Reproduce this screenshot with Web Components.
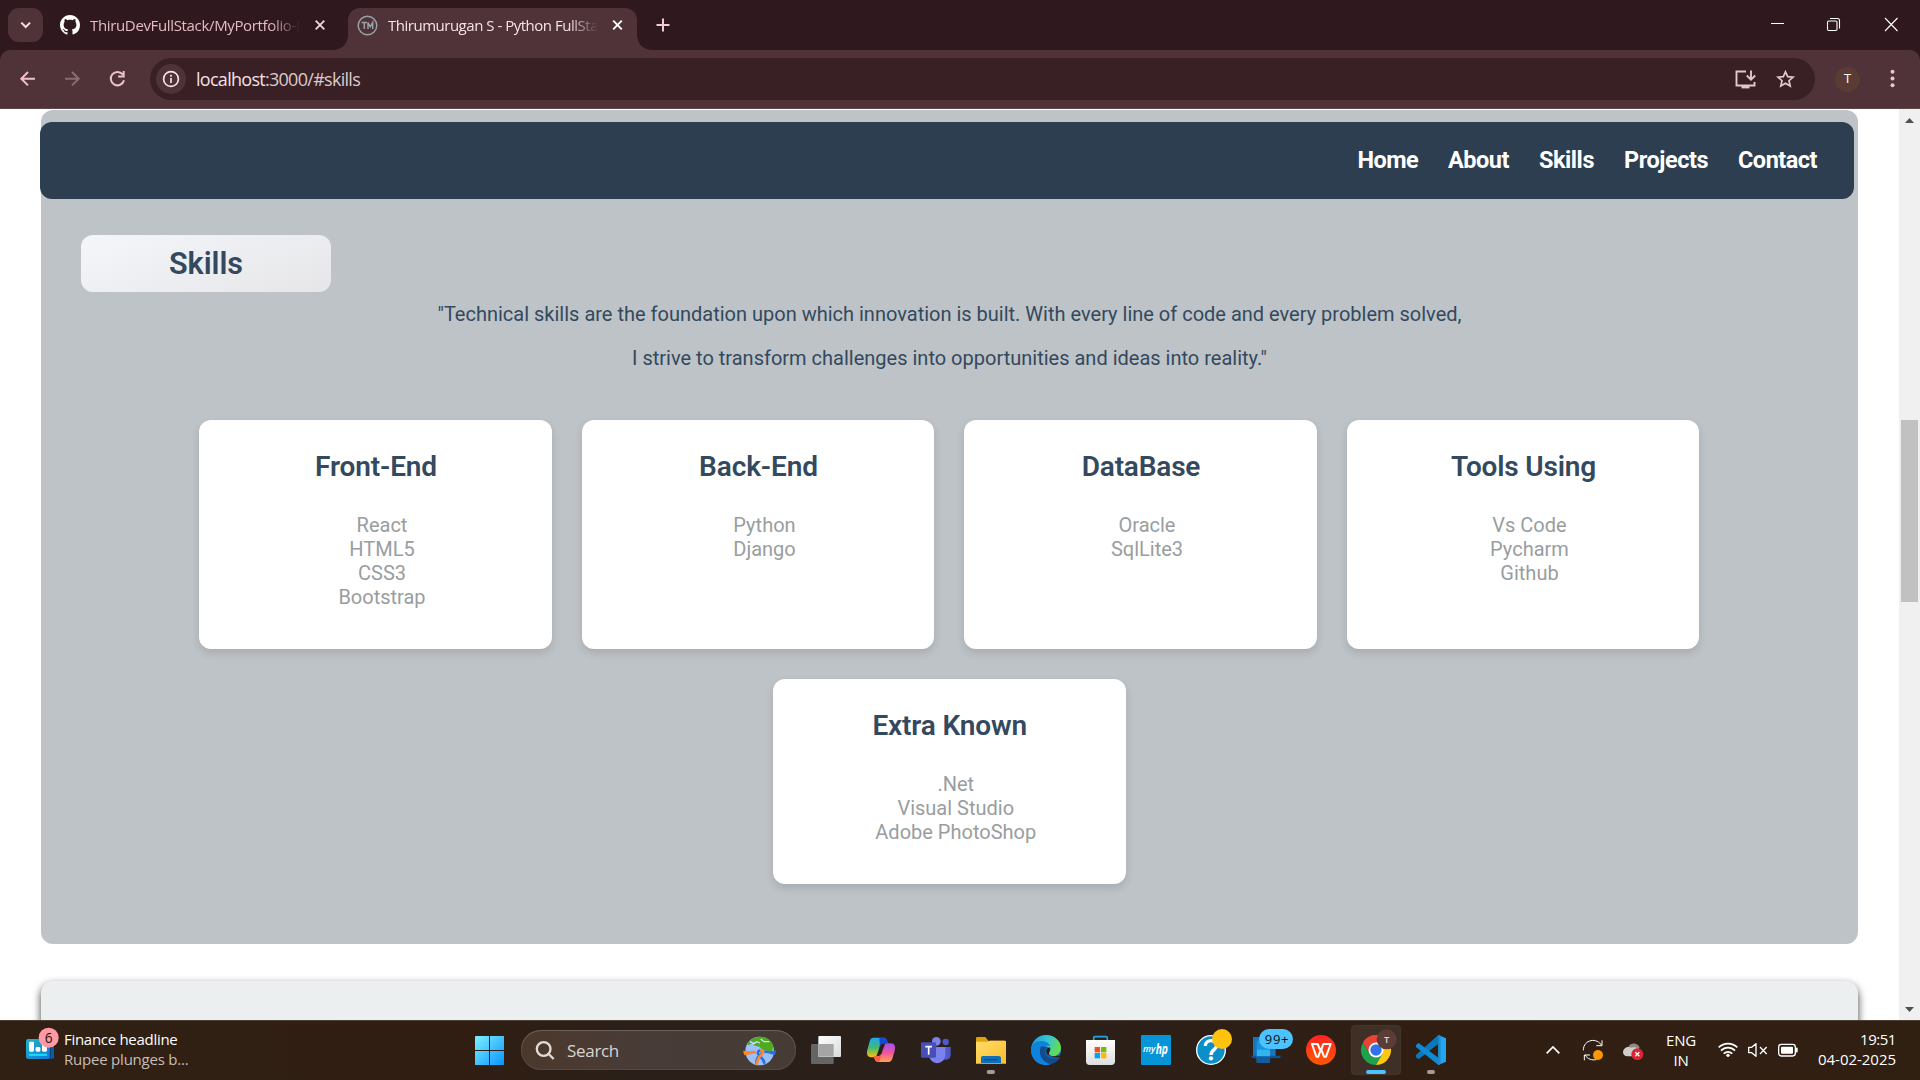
<!DOCTYPE html>
<html lang="en">
<head>
<meta charset="utf-8">
<title>Thirumurugan S - Python FullStack Developer</title>
<style>
html,body{margin:0;padding:0}
body{width:1920px;height:1080px;overflow:hidden;background:#fff;font-family:Roboto,sans-serif}
</style>
</head>
<body>
<desktop-screen>
  <browser-chrome></browser-chrome>
  <page-viewport>
    <skills-section>
      <skill-card label="Front-End" w="122"><li>React</li><li>HTML5</li><li>CSS3</li><li>Bootstrap</li></skill-card>
      <skill-card label="Back-End" w="119"><li>Python</li><li>Django</li></skill-card>
      <skill-card label="DataBase" w="118.5"><li>Oracle</li><li>SqlLite3</li></skill-card>
      <skill-card label="Tools Using" w="145"><li>Vs Code</li><li>Pycharm</li><li>Github</li></skill-card>
      <skill-card label="Extra Known" w="154.5"><li>.Net</li><li>Visual Studio</li><li>Adobe PhotoShop</li></skill-card>
    </skills-section>
    <next-section></next-section>
  </page-viewport>
  <task-bar></task-bar>
</desktop-screen>
<script>
const define = (name, html, cls) => {
  const t = document.createElement('template');
  t.innerHTML = html;
  customElements.define(name, cls ? cls(t) : class extends HTMLElement {
    constructor() {
      super();
      this.attachShadow({ mode: 'open' }).append(t.content.cloneNode(true));
    }
  });
};

define('desktop-screen', `<style>
:host{display:flex;flex-direction:column;width:1920px;height:1080px;overflow:hidden}
</style><slot></slot>`);

define('browser-chrome', `<style>
:host{display:block;height:109px;flex:none;background:#2f191e;font-family:"Open Sans",sans-serif}
.strip{display:flex;height:50px;align-items:flex-start}
.drop{width:35px;height:34px;margin:8px 0 0 8px;border-radius:11px;background:#4f3339;flex:none}
.tab{display:flex;align-items:center;height:42px;padding-bottom:8px;margin-top:8px;font-size:15px;line-height:20px;box-sizing:border-box}
.tab svg{flex:none}
.t1{width:297px;margin-left:8px;padding-left:9px;color:#e6bcc4}
.t2{width:289px;background:#4f3339;border-radius:12px 12px 0 0;position:relative;color:#f6e3e6;padding-left:9px}
.t2::before,.t2::after{content:"";position:absolute;bottom:0;width:14px;height:14px}
.t2::before{left:-14px;background:radial-gradient(circle at 0 0,transparent 13.5px,#4f3339 14px)}
.t2::after{right:-14px;background:radial-gradient(circle at 100% 0,transparent 13.5px,#4f3339 14px)}
.label{white-space:nowrap;width:210px;margin-left:10px;-webkit-mask-image:linear-gradient(90deg,#000 86%,transparent 100%);mask-image:linear-gradient(90deg,#000 86%,transparent 100%)}
.t1 .label{overflow:hidden}
.plus{margin:8px 0 0 12px}
.win{margin:8px 0 0 auto;display:flex}
.bar{height:59px;background:#4f3339;border-radius:10px 10px 0 0;border-bottom:1px solid #5c474b;box-sizing:border-box;display:flex;align-items:flex-start}
.nav{margin-left:0;flex:none}
.omni{margin:8px 0 0;width:1665px;height:42px;border-radius:21px;background:#382024;display:flex;align-items:center;font-size:18px;color:#f5e1e4}
.omni svg{flex:none}
.omni .u{margin-left:9px;white-space:nowrap;line-height:24px}
.omni .r{margin-left:auto;margin-right:0}
.rest{display:flex;align-items:center;height:42px;margin-top:8px}
.ava{width:25px;height:25px;border-radius:50%;background:#5b3b33;margin-left:20px;display:grid;place-items:center;font:13px/25px "Open Sans",sans-serif;color:#fff}
.ava span{margin-top:-2px}
.dots{margin-left:20px}
</style>
<div class="strip">
  <div class="drop"><svg width="35" height="34" viewBox="8 8 35 34" fill="none" stroke="#f1dfe2" stroke-width="2"><path d="M21.3 22.6l4.4 4.4 4.4-4.4"/></svg></div>
  <div class="tab t1">
    <svg width="20" height="20" viewBox="0 0 16 16" fill="#fff"><path d="M8 0C3.58 0 0 3.58 0 8c0 3.54 2.29 6.53 5.47 7.59.4.07.55-.17.55-.38 0-.19-.01-.82-.01-1.49-2.01.37-2.53-.49-2.69-.94-.09-.23-.48-.94-.82-1.13-.28-.15-.68-.52-.01-.53.63-.01 1.08.58 1.23.82.72 1.21 1.87.87 2.33.66.07-.52.28-.87.51-1.07-1.78-.2-3.64-.89-3.64-3.95 0-.87.31-1.59.82-2.15-.08-.2-.36-1.02.08-2.12 0 0 .67-.21 2.2.82.64-.18 1.32-.27 2-.27s1.36.09 2 .27c1.53-1.04 2.2-.82 2.2-.82.44 1.1.16 1.92.08 2.12.51.56.82 1.27.82 2.15 0 3.07-1.87 3.75-3.65 3.95.29.25.54.73.54 1.48 0 1.07-.01 1.93-.01 2.2 0 .21.15.46.55.38A8.01 8.01 0 0016 8c0-4.42-3.58-8-8-8z"/></svg>
    <div class="label"><fit-text w="206">ThiruDevFullStack/MyPortfolio-</fit-text>M</div>
    <svg width="40" height="34" viewBox="300 8 40 34" stroke="#f0d9dd" stroke-width="1.8"><path d="M315.700 20.700l8.600 8.600M324.300 20.700l-8.600 8.600"/></svg>
  </div>
  <div class="tab t2">
    <svg width="21" height="21" viewBox="0 0 21 21" fill="none" stroke="#9b9fa6" stroke-width="1.5"><circle cx="10.500" cy="10.500" r="9.300"/><path d="M4.500 7.500h5.500M7.300 7.500v6.500M11 14V7.500l2.300 4.300 2.400-4.300V14"/></svg>
    <div class="label"><fit-text w="210">Thirumurugan S - Python FullSta</fit-text></div>
    <svg width="38" height="34" viewBox="598 8 38 34" stroke="#fff" stroke-width="1.9"><path d="M613.200 20.700l8.600 8.600M621.800 20.700l-8.600 8.600"/></svg>
  </div>
  <svg class="plus" width="28" height="34" viewBox="649 8 28 34" stroke="#f0cdd3" stroke-width="2"><path d="M656.500 25h13M663 18.500v13"/></svg>
  <svg class="win" width="170" height="34" viewBox="1750 8 170 34" fill="none" stroke="#fff" stroke-width="1.100"><path d="M1771 23.500h13M1885 18l12.500 13M1897.500 18L1885 31"/><rect x="1827.500" y="21" width="9.500" height="9.500" rx="1.200"/><path d="M1830 18.500h7.500a2 2 0 0 1 2 2v8"/></svg>
</div>
<div class="bar">
  <svg class="nav" width="150" height="58" viewBox="0 50 150 58" fill="none" stroke="#efc1ca" stroke-width="2"><path d="M35 78.700H21.500M28 72l-6.700 6.700 6.700 6.700"/><g stroke="#8c6c72"><path d="M65 78.700h13.500M72 72l6.700 6.700-6.700 6.700"/></g><path d="M123 74.800a6.700 6.700 0 1 0 1 5.500M123.700 71v5.500h-5.600"/></svg>
  <div class="omni">
    <svg width="37" height="42" viewBox="150 58 37 42"><circle cx="171" cy="79" r="15" fill="#4f3339"/><g fill="none" stroke="#f3e4e6" stroke-width="1.700"><circle cx="171" cy="79" r="7.400"/><path d="M171 78v5M171 74.700v2"/></g></svg>
    <div class="u"><fit-text w="164"><span>localhost</span><span style="color:#dccacd">:3000/#skills</span></fit-text></div>
    <svg class="r" width="90" height="42" viewBox="1725 58 90 42" fill="none" stroke="#dfc9cc" stroke-width="1.900"><path d="M1746 71.500h-9.500v14h18v-3.500M1751 70.500v9M1746.800 75.500l4.200 4.200 4.200-4.200"/><path d="M1741.500 87h8" stroke-width="2.800"/><path d="M1785.500 71.800l2.200 4.900 5.300.5-4 3.500 1.200 5.300-4.700-2.800-4.700 2.800 1.200-5.300-4-3.500 5.300-.5z" stroke-width="1.700"/></svg>
  </div>
  <div class="rest"><div class="ava"><span>T</span></div><svg class="dots" width="26" height="42" viewBox="1880 58 26 42" fill="#f0c3cb"><circle cx="1892.500" cy="71.700" r="2"/><circle cx="1892.500" cy="78.500" r="2"/><circle cx="1892.500" cy="85.300" r="2"/></svg></div>
</div>`);

define('page-viewport', `<style>
:host{display:flex;height:911px;flex:none;overflow:hidden;background:#fff}
.content{width:1899px;height:911px;overflow:hidden;padding:1px 41px 0;box-sizing:border-box;display:flex;flex-direction:column;gap:37px;align-items:flex-start}
.scroll{width:21px;background:#f0f0f0;display:flex;flex-direction:column;align-items:center}
.thumb{width:17px;height:182px;background:#c1c1c1;margin-top:289px}
.scroll svg{flex:none}
.down{margin-top:auto}
</style>
<div class="content"><slot></slot></div>
<div class="scroll">
<svg width="21" height="22" viewBox="1899 109 21 22" fill="#505050"><path d="M1905 123l4.500-5 4.500 5z"/></svg>
<div class="thumb"></div>
<svg class="down" width="21" height="22" viewBox="1899 998 21 22" fill="#505050"><path d="M1905 1007l4.500 5 4.500-5z"/></svg></div>`);

define('site-nav', `<style>
:host{display:flex;width:1814px;height:77px;margin-left:-1px;border-radius:12px;background:#2c3e50;box-sizing:border-box;padding:0 37px 2px 0;justify-content:flex-end;align-items:center;gap:30px;font-weight:700;font-size:23.500px;color:#fff;line-height:26px}
</style>
<fit-text w="60.500">Home</fit-text><fit-text w="61">About</fit-text><fit-text w="55">Skills</fit-text><fit-text w="84">Projects</fit-text><fit-text w="79">Contact</fit-text>`);

define('skills-section', `<style>
:host{display:block;width:1817px;height:834px;flex:none;box-sizing:border-box;padding-top:12px;border-radius:12px;background:#bdc3c7;color:#34495e}
h2{margin:36px 0 0 40px;width:250px;height:57px;border-radius:12px;background:linear-gradient(160deg,#f4f6fa,#e6e6e8);font-size:30.500px;font-weight:600;line-height:57px;text-align:center}
p{margin:0;text-align:center;font-size:20px;line-height:44px}
.grid{display:flex;flex-wrap:wrap;justify-content:center;gap:30px;width:1500px;margin:40px 0 0 158.250px}
</style>
<site-nav></site-nav>
<h2><fit-text w="74">Skills</fit-text></h2>
<p><fit-text w="1024">"Technical skills are the foundation upon which innovation is built. With every line of code and every problem solved,</fit-text><br><fit-text w="635">I strive to transform challenges into opportunities and ideas into reality."</fit-text></p>
<div class="grid"><slot></slot></div>`);

define('skill-card', `<style>
:host{display:flex;flex-direction:column;align-items:center;box-sizing:border-box;width:352.500px;padding:30px 0 40px;border-radius:12px;background:#fff;box-shadow:0 4px 8px rgba(0,0,0,.12)}
h3{margin:0 0 30px;padding-left:1px;font-size:28px;font-weight:600;line-height:33px;color:#34495e;white-space:nowrap}
ul{margin:0;padding:0 0 0 13px;list-style:none;text-align:center;font-size:20px;line-height:24px;color:#999da0}
::slotted(li){list-style:none}
</style><h3></h3><ul><slot></slot></ul>`, t => class extends HTMLElement {
  constructor() {
    super();
    this.attachShadow({ mode: 'open' }).append(t.content.cloneNode(true));
    const f = document.createElement('fit-text');
    f.setAttribute('w', this.getAttribute('w'));
    f.textContent = this.getAttribute('label');
    this.shadowRoot.querySelector('h3').append(f);
  }
});

define('next-section', `<style>
:host{display:block;width:1817px;height:300px;flex:none;border-radius:12px;background:#ebefef;box-shadow:0 4px 8px rgba(0,0,0,.75)}
</style>`);

define('task-bar', `<style>
:host{display:flex;height:60px;flex:none;box-sizing:border-box;background:linear-gradient(90deg,#302014,#301e13 25%,#2a2019 33%,#2b2019 55%,#301e13 72%,#302012);box-shadow:inset 0 1px #4b3f36;font-family:"Open Sans",sans-serif;color:#fff}
svg{flex:none;display:block}
.widget{display:flex;width:462px;flex:none;font-size:15px;line-height:20px;white-space:nowrap}
.widget div{padding-top:9px}
.widget fit-text{display:block}
.dim{color:#c6bdb7}
.search{display:flex;align-items:center;width:275px;height:40px;margin:10px 2px 0 4px;border-radius:20px;box-sizing:border-box;background:linear-gradient(90deg,#4c382b,#483c38 45%,#463b35);box-shadow:inset 0 1px #6b5d58,inset 0 0 0 1px #554843;font-size:17px;color:#d9d4d1;overflow:hidden}
.tray{margin-left:auto;display:flex;font-size:15px;line-height:20px}
.txt{padding-top:10px;display:flex;flex-direction:column}
</style>
<div class="widget">
<svg width="64" height="60" viewBox="0 180 192 180"><defs><linearGradient id="w" x2="1" y2="1"><stop stop-color="#22b5c9"/><stop offset="1" stop-color="#1476d4"/></linearGradient></defs><rect x="100" y="237" width="62" height="60" rx="6" fill="#0c5ba8"/><rect x="78" y="237" width="73" height="60" rx="7" fill="url(#w)"/><path d="M151 250v47" stroke="#083c70" stroke-width="3"/><g fill="#fff"><rect x="87" y="245" width="15" height="30" rx="4"/><rect x="107" y="261" width="14" height="14" rx="4"/><rect x="126" y="250" width="15" height="25" rx="4"/></g><rect x="86" y="281" width="56" height="7" rx="3" fill="#10d8f5"/><circle cx="146" cy="233" r="30" fill="#ff99a4"/><text x="146" y="248" text-anchor="middle" font-family="Open Sans" font-size="41" fill="#1b1012">6</text></svg>
<div><fit-text w="113.500">Finance headline</fit-text><fit-text class="dim" w="124.500">Rupee plunges b...</fit-text></div>
</div>
<svg width="55" height="60" viewBox="-24 15 165 180"><defs><linearGradient id="s" gradientUnits="userSpaceOnUse" x1="15" y1="63" x2="102" y2="150"><stop stop-color="#7df0ff"/><stop offset="1" stop-color="#0a94ff"/></linearGradient></defs><path fill="url(#s)" d="M17 63h40v42H15V65zM60 63h42v42H60zM15 108h42v42H15zM60 108h42v42H60z"/></svg>
<div class="search">
<svg width="46" height="40" viewBox="153 45 138 120" fill="none" stroke="#e0dbd8" stroke-width="7"><circle cx="221" cy="102" r="20.500"/><path d="M236 117l15 15"/></svg>
<fit-text w="52">Search</fit-text>
<svg style="margin-left:auto" width="70" height="40" viewBox="766 43 210 120"><circle cx="867" cy="106" r="43" fill="#9dc0fa"/><path d="M830 86c8-14 20-22 37-23 22 0 36 12 41 28l-6 26-12-12-14-2-10-10-18-4 6-10-22 10z" fill="#51a91d"/><path d="M838 78l12 6 8-6 10 4M870 70l10 8 16 0" fill="none" stroke="#c9e6ff" stroke-width="4"/><path d="M817 105l4 14 22-4 14-2-4-8-20 2z" fill="#ff8425"/><path d="M917 104l-5 14-20-5-14-2 4-7 18 3z" fill="#2b72dd"/><path d="M858 146c-2-18 4-22 12-28 8-8 4-16-2-14-8 2-8 10-2 16 10 8 14 14 16 24" fill="none" stroke="#2b6fdc" stroke-width="8"/><path d="M868 104c10-2 12 6 4 14-8 6-12 14-14 30" fill="none" stroke="#ff8a2b" stroke-width="8"/></svg>
</div>
<svg width="55" height="60" viewBox="984 15 165 180"><defs><linearGradient id="tv" x2="1" y2="1"><stop stop-color="#fff"/><stop offset="1" stop-color="#dadada"/></linearGradient></defs><rect x="1023" y="87" width="68" height="60" rx="3" fill="#656565"/><rect x="1045" y="63" width="68" height="63" rx="3" fill="url(#tv)"/><path d="M1045 87h46v38h-46z" fill="#a5a5a5"/></svg>
<svg width="55" height="60" viewBox="1149 15 165 180"><defs><linearGradient id="c1" x2="0" y2="1"><stop stop-color="#22a5f2"/><stop offset=".5" stop-color="#3dbb75"/><stop offset="1" stop-color="#ffc400"/></linearGradient><linearGradient id="c2" x2="0" y2="1"><stop stop-color="#a24ff2"/><stop offset=".5" stop-color="#ef559e"/><stop offset="1" stop-color="#ffa44e"/></linearGradient></defs><path d="M1210 68h31c8 0 9 9 14 17h-14c-9 0-12 8-14 17l-8 22c-3 4-8 3-13 3-14 0-17-9-14-22l7-26c2-7 5-11 11-11z" fill="url(#c1)"/><path d="M1255 85h7c13 0 15 10 12 22l-7 24c-3 7-7 10-13 10h-30c-8 0-10-8-13-17h12c9 0 12-7 14-15l8-22c2-3 5-2 10-2z" fill="url(#c2)"/><path d="M1228 68h14c7 0 9 8 13 17h-13c-7 0-10 4-12 10z" fill="#1648d0"/><path d="M1211 124h12c6 0 9-3 12-9l-7 26c-10 0-13-8-17-17z" fill="#ff5d42"/></svg>
<svg width="55" height="60" viewBox="1314 15 165 180"><circle cx="1427" cy="81" r="9.500" fill="#5059c9"/><path d="M1415 96h27v22c0 10-5 16-14 16h-13z" fill="#5059c9"/><circle cx="1399" cy="79" r="13" fill="#7b83eb"/><path d="M1377 96h49v25a24 23 0 0 1-49 0z" fill="#7b83eb"/><rect x="1353" y="82" width="45" height="46" rx="4" fill="#464eb8"/><path d="M1366 95h20M1376 95v24" stroke="#fff" stroke-width="5"/></svg>
<svg width="55" height="60" viewBox="9 15 165 180"><defs><linearGradient id="f" x2="1" y2="1"><stop stop-color="#ffdd68"/><stop offset="1" stop-color="#fbbd2d"/></linearGradient></defs><path d="M48 70q0-4 4-4h24l9 11h49q4 0 4 4v20H48z" fill="#dda20c"/><path d="M48 80h35l7-3h44q4 0 4 4v65H48z" fill="url(#f)"/><path d="M63 144v-15q0-6 6-6h47q7 0 7 6v15z" fill="#0f70b9"/><path d="M72 134h40" stroke="#07508d" stroke-width="4"/><rect x="80" y="165" width="25" height="12" rx="6" fill="#a39c96"/></svg>
<svg width="55" height="60" viewBox="174 15 165 180"><defs><linearGradient id="e1" x2="1" y2=".3"><stop stop-color="#1c9ce4"/><stop offset=".6" stop-color="#36c5cf"/><stop offset="1" stop-color="#62dc55"/></linearGradient></defs><circle cx="258" cy="105" r="45" fill="#0f65b8"/><path d="M214 98c4-22 22-38 44-38 26 0 45 18 45 39 0 15-11 25-25 25-11 0-15-5-12-10 8-12-1-21-15-21-17 0-31 3-37 5z" fill="url(#e1)"/><path d="M213 105c0-17 13-27 30-27 14 0 25 7 28 16-15-5-29 3-29 19 0 18 13 32 32 34-29 12-61-9-61-42z" fill="#0d83dc"/><path d="M243 94c-10 22 3 50 32 53 12-4 22-12 26-21-12 7-34 6-42-5-7-10-5-20 2-25z" fill="#144b8e"/><path d="M269 97c6 8-4 15-2 20 3 7 15 9 25 5 4 0 7 1 10 1-6 8-34 3-41-7-5-8-2-16 8-19z" fill="#291e17"/></svg>
<svg width="55" height="60" viewBox="339 15 165 180"><defs><linearGradient id="st" x2="0" y2="1"><stop stop-color="#fff"/><stop offset="1" stop-color="#dedede"/></linearGradient></defs><path d="M401 80V69q0-4 4-4h33q4 0 4 4v11" fill="none" stroke="#26a2e4" stroke-width="5"/><path d="M378 75h87v64q0 11-11 11h-65q-11 0-11-11z" fill="url(#st)"/><path fill="#f25022" d="M404 96h16v16h-16z"/><path fill="#7fba00" d="M423 96h16v16h-16z"/><path fill="#00a4ef" d="M404 114h16v16h-16z"/><path fill="#ffb900" d="M423 114h16v16h-16z"/></svg>
<svg width="55" height="60" viewBox="504 15 165 180"><rect x="543" y="60" width="90" height="90" rx="3" fill="#0696d7"/><g font-family="Open Sans" font-style="italic" fill="#fff"><text x="549" y="112" font-size="27" font-weight="600" textLength="37" lengthAdjust="spacingAndGlyphs">my</text><text x="587" y="117" font-size="40" font-weight="700" textLength="37" lengthAdjust="spacingAndGlyphs">hp</text></g></svg>
<svg width="55" height="60" viewBox="669 15 165 180"><circle cx="753" cy="105" r="43" fill="#0a8fcb" stroke="#fff" stroke-width="4"/><path d="M736 93c0-21 34-21 34-2 0 13-17 13-17 29" fill="none" stroke="#fff" stroke-width="10"/><circle cx="753" cy="130" r="6.500" fill="#fff"/><circle cx="786" cy="72" r="30" fill="#ffc20e"/></svg>
<svg width="55" height="60" viewBox="834 15 165 180"><path d="M879 66h68v58h-68z" fill="#1976bd"/><path d="M873 122h90q-2 8-10 8h-70q-8 0-10-8z" fill="#0e5496"/><path d="M890 77h40v67h-40z" fill="#1795dc"/><path d="M891 104h39v20h-39z" fill="#33b4ed"/><path d="M891 124h39v20h-39z" fill="#115b9f"/><rect x="897" y="42" width="102" height="60" rx="30" fill="#4cc2ff"/><text x="950" y="86" text-anchor="middle" font-family="Open Sans" font-size="39" textLength="71" fill="#101010">99+</text></svg>
<svg width="55" height="60" viewBox="999 15 165 180"><defs><linearGradient id="wp" x2="0" y2="1"><stop stop-color="#ff2222"/><stop offset="1" stop-color="#ff5a00"/></linearGradient></defs><circle cx="1083" cy="105" r="45" fill="url(#wp)"/><path d="M1056 87h17l9 22 8-22h22l-14 38h-6l-9-24-8 24h-6z" fill="none" stroke="#fff" stroke-width="6" stroke-linejoin="round"/></svg>
<svg width="55" height="60" viewBox="1164 15 165 180"><rect x="1174" y="31" width="148" height="148" rx="12" fill="#3e2f27" stroke="#4c3e35" stroke-width="2"/><path d="M1248 105L1209 82.500A45 45 0 0 1 1287 82.500z" fill="#ea4335"/><path d="M1209 82.500A45 45 0 0 0 1248 150l20-33.500-39 0z" fill="#1ea24d"/><path d="M1287 82.500A45 45 0 0 1 1248 150l19.500-34-19.500-33.500z" fill="#fdc813"/><path d="M1248 82.500h39A45 45 0 0 0 1209 82.500l20 34z" fill="#ea4335"/><circle cx="1248" cy="105" r="22.500" fill="#fff"/><circle cx="1248" cy="105" r="17" fill="#2e74e8"/><circle cx="1280" cy="73" r="30" fill="#5c3d36"/><text x="1280" y="83" text-anchor="middle" font-family="Open Sans" font-weight="600" font-size="28" fill="#e0d4d0">T</text><rect x="1218" y="165" width="60" height="12" rx="6" fill="#4cc2ff"/></svg>
<svg width="55" height="60" viewBox="1329 15 165 180"><path d="M1435 60l23 10v70l-23 10z" fill="#24a5ef"/><path d="M1435 60l-67 60v7l8 6 59-47z" fill="#0879be"/><path d="M1368 90l8-6 59 44v22l-67-54z" fill="#0f8bd6"/><path d="M1435 60v90l7-3V63z" fill="#168fd8"/><rect x="1401" y="165" width="24" height="12" rx="6" fill="#a39c96"/></svg>
<div class="tray">
<svg width="160" height="60" viewBox="120 180 480 180" fill="none" stroke="#fff" style="margin-right:-32px"><path d="M140 280l19-19 19 19" stroke-width="5"/><g stroke-width="3"><path d="M250 271c0-34 43-39 55-14M306 241v16h-17M289 299c-13 2-26-1-34-14M270 285h-17v16"/></g><circle cx="294" cy="285" r="15" fill="#ff9800" stroke="none"/><g stroke="none"><path d="M385 262c3-16 31-16 34 2l-20 16z" fill="#8f8a87"/><path d="M369 277c0-14 15-20 26-14 12-5 23 3 23 13 0 8-6 13-12 13h-24c-8 0-13-5-13-12z" fill="#cfccca"/><circle cx="412" cy="283" r="18" fill="#d92534"/></g><path d="M406 277l12 12M418 277l-12 12" stroke-width="4"/></svg>
<div class="txt" style="width:44px;align-items:center;margin-left:-9px;margin-right:12px"><fit-text w="30">ENG</fit-text><fit-text w="15">IN</fit-text></div>
<svg width="90" height="60" viewBox="645 180 270 180" fill="none" stroke="#fff" stroke-width="5"><path d="M656 262c16-15 40-15 56 0M663 272c12-12 30-12 42 0M671 281c8-7 18-7 26 0"/><circle cx="684" cy="286" r="5" fill="#fff" stroke="none"/><path d="M746 262h9l13-11v38l-13-11h-9z" stroke-width="4" stroke-linejoin="round"/><path d="M780 261l20 21M800 261l-20 21" stroke-width="4"/><rect x="836" y="253" width="50" height="35" rx="8" stroke-width="4"/><rect x="843" y="260" width="36" height="21" rx="3" fill="#fff" stroke="none"/><path d="M890 263v14" stroke-width="6"/></svg>
<div class="txt" style="width:91px;align-items:flex-end;margin-right:24px;padding-top:9px"><fit-text w="36">19:51</fit-text><fit-text w="78">04-02-2025</fit-text></div>
</div>`);

// Adjusts tracking so that a label takes up its given advance width.
define('fit-text', `<style>:host{display:inline-block;white-space:nowrap}span{display:inline-block}</style><span><slot></slot></span>`,
  t => class extends HTMLElement {
    constructor() {
      super();
      this.attachShadow({ mode: 'open' }).append(t.content.cloneNode(true));
    }
    connectedCallback() {
      const span = this.shadowRoot.querySelector('span');
      const natural = span.getBoundingClientRect().width;
      const n = this.textContent.length;
      const w = parseFloat(this.getAttribute('w'));
      if (natural && n) span.style.letterSpacing = (w - natural) / n + 'px';
    }
  });
</script>
</body>
</html>
